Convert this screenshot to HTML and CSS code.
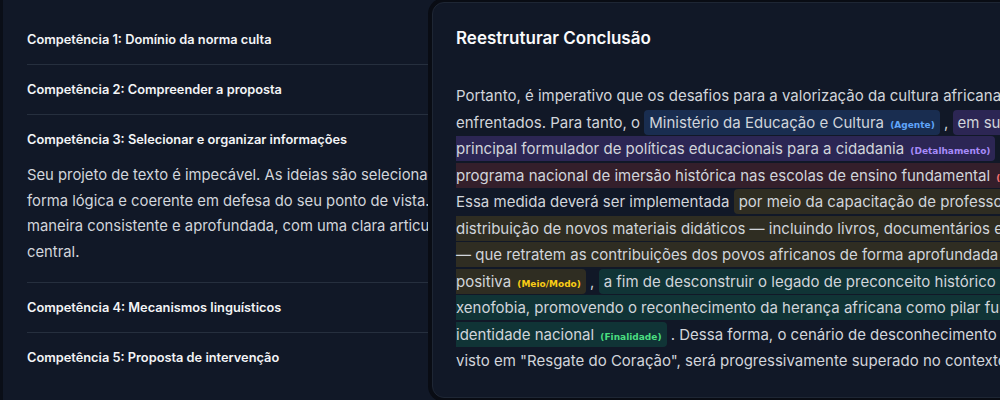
FILE: index.html
```html
<!DOCTYPE html>
<html lang="pt-BR">
<head>
<meta charset="utf-8">
<title>Reestruturar Conclusão</title>
<link rel="stylesheet" href="styles.css">
</head>
<body>
<div class="page">
  <section class="panel">
    <div class="item"><h3 class="item-title">Competência 1: Domínio da norma culta</h3></div>
    <div class="item"><h3 class="item-title">Competência 2: Compreender a proposta</h3></div>
    <div class="item open">
      <h3 class="item-title">Competência 3: Selecionar e organizar informações</h3>
      <p class="item-body">Seu projeto de texto é impecável. As ideias são selecionadas e organizadas de<br>forma lógica e coerente em defesa do seu ponto de vista. O tema é desenvolvido de<br>maneira consistente e aprofundada, com uma clara articulação em torno da tese<br>central.</p>
    </div>
    <div class="item"><h3 class="item-title">Competência 4: Mecanismos linguísticos</h3></div>
    <div class="item"><h3 class="item-title">Competência 5: Proposta de intervenção</h3></div>
  </section>

  <div class="modal">
    <h2 class="modal-title">Reestruturar Conclusão</h2>
    <p class="modal-text">Portanto, é imperativo que os desafios para a valorização da cultura africana sejam<br>enfrentados. Para tanto, o <span class="hl hl-blue">Ministério da Educação e Cultura <span class="tag tag-blue">(Agente)</span></span> , <span class="hl hl-purple">em sua função de<br>principal formulador de políticas educacionais para a cidadania <span class="tag tag-purple">(Detalhamento)</span></span> , <span class="hl hl-red">deve criar um<br>programa nacional de imersão histórica nas escolas de ensino fundamental <span class="tag tag-red">(Ação)</span></span> .<br>Essa medida deverá ser implementada <span class="hl hl-yellow">por meio da capacitação de professores e da<br>distribuição de novos materiais didáticos — incluindo livros, documentários e filmes<br>— que retratem as contribuições dos povos africanos de forma aprofundada e<br>positiva <span class="tag tag-yellow">(Meio/Modo)</span></span> , <span class="hl hl-green">a fim de desconstruir o legado de preconceito histórico e de<br>xenofobia, promovendo o reconhecimento da herança africana como pilar fundamental da<br>identidade nacional <span class="tag tag-green">(Finalidade)</span></span> . Dessa forma, o cenário de desconhecimento cultural,<br>visto em "Resgate do Coração", será progressivamente superado no contexto brasileiro.</p>
  </div>
</div>
</body>
</html>
```

FILE: styles.css
```css
* { box-sizing: border-box; }

html, body {
  margin: 0;
  padding: 0;
}

body {
  width: 1000px;
  height: 400px;
  overflow: hidden;
  background: #0a0e17;
  font-family: Inter, "Noto Sans", "Liberation Sans", sans-serif;
}

.page {
  position: relative;
  width: 1000px;
  height: 400px;
  overflow: hidden;
}

.panel {
  margin-left: 3px;
  height: 400px;
  background: #111827;
  padding: 15px 0 0 24px;
}

.item {
  border-bottom: 1px solid #262f3e;
  padding: 16px 0;
}

.item:last-child { border-bottom: none; }

.item-title {
  margin: 0;
  font-size: 12.8px;
  line-height: 17px;
  font-weight: 600;
  color: #f3f4f6;
  white-space: nowrap;
}

.item-body {
  margin: 15px 0 0;
  font-size: 14.8px;
  line-height: 25.7px;
  color: #d1d5db;
  white-space: nowrap;
}

.modal {
  position: absolute;
  left: 432px;
  top: 2px;
  width: 780px;
  height: 396px;
  background: #111827;
  border: 1px solid #1e2634;
  border-radius: 12px;
  box-shadow: 0 0 0 4px #090c14;
  padding: 23px 23px;
}

.modal-title {
  margin: 0;
  font-size: 17px;
  line-height: 24px;
  font-weight: 600;
  color: #f9fafb;
}

.modal-text {
  margin: 33px 0 0;
  font-size: 15px;
  line-height: 26.5px;
  color: #d1d5db;
  white-space: nowrap;
}

.hl {
  padding: 3px 5px;
  border-radius: 4px;
}

.hl-blue { background: rgba(59, 130, 246, 0.2); }
.hl-purple { background: rgba(139, 92, 246, 0.22); }
.hl-red { background: rgba(239, 68, 68, 0.16); }
.hl-yellow { background: rgba(234, 179, 8, 0.14); }
.hl-green { background: rgba(16, 185, 129, 0.18); }

.tag {
  font-family: "DejaVu Sans", Verdana, sans-serif;
  font-size: 9px;
  line-height: 1;
  font-weight: 700;
  margin-left: 2px;
}

.tag-blue { color: #60a5fa; }
.tag-purple { color: #a78bfa; }
.tag-red { color: #f87171; }
.tag-yellow { color: #facc15; }
.tag-green { color: #4ade80; }
```
